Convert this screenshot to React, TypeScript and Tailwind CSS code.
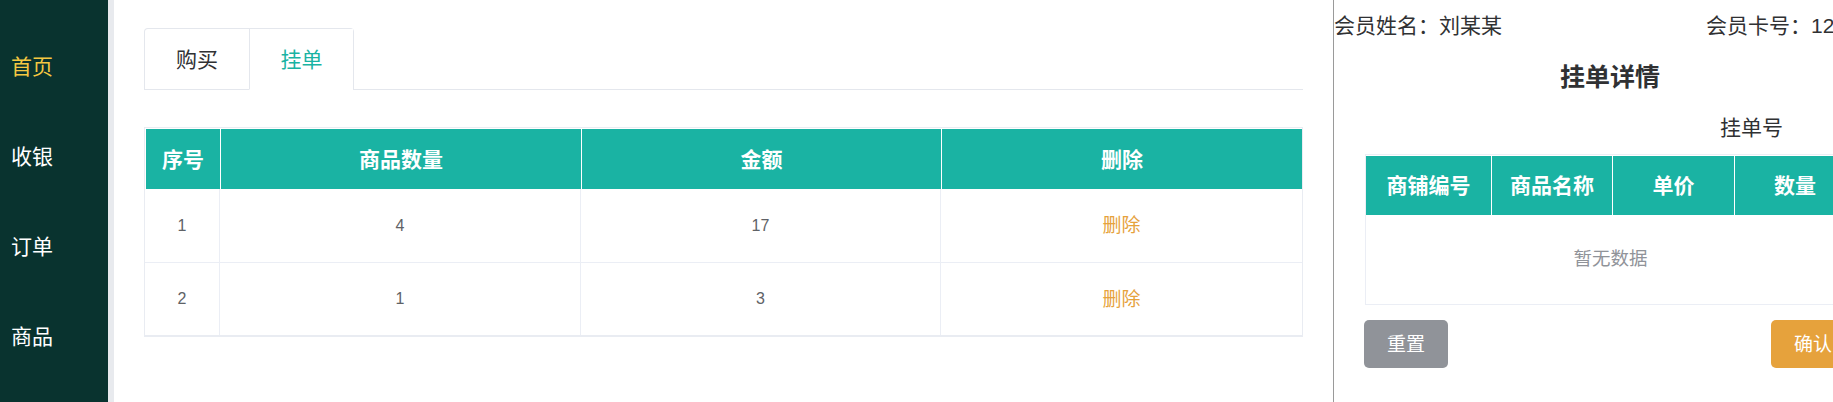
import React from "react";

const font = { fontFamily: '"Liberation Sans", "Noto Sans CJK SC", sans-serif' };

const navItems = [
  { label: "首页", active: true },
  { label: "收银", active: false },
  { label: "订单", active: false },
  { label: "商品", active: false },
];

const rows = [
  { id: 1, qty: 4, amount: 17 },
  { id: 2, qty: 1, amount: 3 },
];

export default function App() {
  return (
    <div className="flex h-[402px] w-[1833px] overflow-hidden bg-white" style={font}>
      <aside className="flex w-[108px] shrink-0 flex-col bg-[#09332f] pt-[21px]">
        {navItems.map((n) => (
          <div
            key={n.label}
            className={`flex h-[90px] items-center pl-[11px] text-[21px] leading-none ${
              n.active ? "text-[#f5c842]" : "text-white"
            }`}
          >
            {n.label}
          </div>
        ))}
      </aside>
      <div className="w-[6px] shrink-0 bg-[#e8eaee]" />

      <main className="w-[1219px] shrink-0 px-[30px] pt-[28px]">
        <div className="flex border-b border-[#e4e7ed]">
          <div className="mb-[-1px] flex rounded-t-[4px] border border-b-0 border-[#e4e7ed]">
            <div className="flex h-[61px] w-[104px] items-center justify-center border-b border-b-transparent text-[21px] leading-none text-[#303133]">
              购买
            </div>
            <div className="flex h-[61px] w-[104px] items-center justify-center border-b border-l border-b-white border-l-[#e4e7ed] bg-white text-[21px] leading-none text-[#1ab3a3]">
              挂单
            </div>
          </div>
        </div>

        <div className="mt-[37px] border border-b-2 border-[#e9ecf2]">
          <div className="grid h-[61px] grid-cols-[75px_361px_360px_1fr] border-l border-t border-white bg-[#1ab3a3] text-[21px] font-bold leading-none text-white">
            <div className="flex items-center justify-center border-r border-white">序号</div>
            <div className="flex items-center justify-center border-r border-white">商品数量</div>
            <div className="flex items-center justify-center border-r border-white">金额</div>
            <div className="flex items-center justify-center">删除</div>
          </div>
          {rows.map((r, i) => (
            <div
              key={r.id}
              className={`grid h-[73px] grid-cols-[75px_361px_360px_1fr] text-[16px] leading-none text-[#606266] ${
                i > 0 ? "border-t border-[#ebeef5]" : ""
              }`}
            >
              <div className="flex items-center justify-center border-r border-[#ebeef5]">{r.id}</div>
              <div className="flex items-center justify-center border-r border-[#ebeef5]">{r.qty}</div>
              <div className="flex items-center justify-center border-r border-[#ebeef5]">{r.amount}</div>
              <div className="flex items-center justify-center text-[19px] text-[#e6a23c]">删除</div>
            </div>
          ))}
        </div>
      </main>

      <section className="w-[553px] shrink-0 border-l border-[#9a9a9a] text-[#303133]">
        <div className="flex h-[50px] items-center whitespace-nowrap text-[21px] leading-none">
          <span className="w-[372px] shrink-0">会员姓名：刘某某</span>
          <span>会员卡号：123456</span>
        </div>
        <div className="flex h-[54px] items-center justify-center text-[25px] font-bold leading-none">
          挂单详情
        </div>
        <div className="flex h-[46px] items-center pl-[386px] text-[21px] leading-none">挂单号</div>

        <div className="ml-[31px] mt-[4px] w-[491px] border border-[#ebeef5]">
          <div className="grid h-[60px] grid-cols-[126px_121px_122px_1fr] border-t border-white bg-[#1ab3a3] text-[21px] font-bold leading-none text-white">
            <div className="flex items-center justify-center border-r border-white">商铺编号</div>
            <div className="flex items-center justify-center border-r border-white">商品名称</div>
            <div className="flex items-center justify-center border-r border-white">单价</div>
            <div className="flex items-center justify-center">数量</div>
          </div>
          <div className="flex h-[89px] items-center justify-center text-[18.5px] leading-none text-[#909399]">
            暂无数据
          </div>
        </div>

        <div className="ml-[30px] mt-[15px] flex w-[491px] justify-between">
          <button className="flex h-[48px] w-[84px] items-center justify-center rounded-[5px] bg-[#909399] text-[19px] leading-none text-white">
            重置
          </button>
          <button className="flex h-[48px] w-[84px] items-center justify-center rounded-[5px] bg-[#e6a23c] text-[19px] leading-none text-white">
            确认
          </button>
        </div>
      </section>
    </div>
  );
}
